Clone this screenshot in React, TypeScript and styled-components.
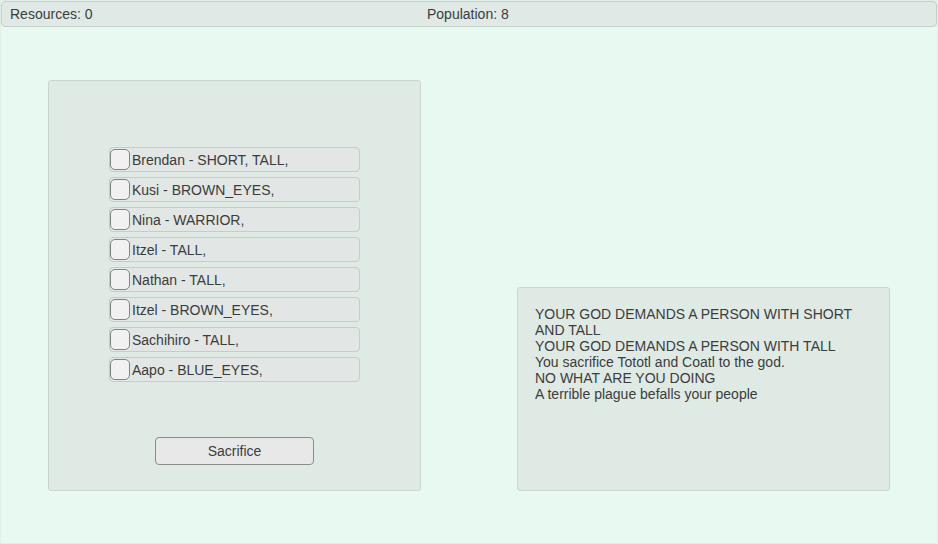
import React from "react";
import styled, { createGlobalStyle } from "styled-components";

const Global = createGlobalStyle`
  html, body { margin: 0; padding: 0; }
  body {
    width: 938px;
    height: 544px;
    overflow: hidden;
    font-family: "Liberation Sans", Arial, sans-serif;
    color: #3a3d3b;
  }
`;

const Screen = styled.div`
  box-sizing: border-box;
  width: 938px;
  height: 544px;
  background: #e8f9f1;
  border: 1px solid #e0eee7;
  display: flex;
  flex-direction: column;
`;

const TopBar = styled.div`
  box-sizing: border-box;
  height: 26px;
  background: #e0e9e5;
  border: 1px solid #c4d0ca;
  border-radius: 4px;
  display: flex;
  align-items: center;
  font-size: 14px;
  padding-left: 8px;
`;

const Stat = styled.span<{ $width?: number }>`
  display: inline-block;
  width: ${(p) => (p.$width ? `${p.$width}px` : "auto")};
`;

const Main = styled.div`
  display: flex;
  align-items: flex-end;
  gap: 96px;
  padding-left: 47px;
  margin-top: 53px;
`;

const Panel = styled.div<{ $height: number }>`
  box-sizing: border-box;
  width: 373px;
  height: ${(p) => p.$height}px;
  background: #e0eae5;
  border: 1px solid #c9d6cf;
  border-radius: 3px;
`;

const ListPanel = styled(Panel)`
  display: flex;
  flex-direction: column;
  align-items: center;
  padding-top: 66px;
`;

const RowList = styled.div`
  display: flex;
  flex-direction: column;
  gap: 5px;
`;

const Row = styled.label`
  box-sizing: border-box;
  width: 251px;
  height: 25px;
  background: #e2e6e4;
  border: 1px solid #c6cdc9;
  border-radius: 4px;
  display: flex;
  align-items: center;
  padding-left: 0;
  font-size: 14px;
  cursor: pointer;
`;

const Box = styled.span`
  box-sizing: border-box;
  width: 20px;
  height: 21px;
  background: #f1f1f1;
  border: 1px solid #7f8582;
  border-radius: 5px;
  margin-right: 2px;
  flex-shrink: 0;
`;

const Button = styled.button`
  box-sizing: border-box;
  margin-top: 55px;
  width: 159px;
  height: 28px;
  background: #e8e8e8;
  border: 1px solid #8a8d8b;
  border-radius: 4px;
  font-family: "Liberation Sans", Arial, sans-serif;
  font-size: 14px;
  color: #3a3d3b;
  padding: 0;
  cursor: pointer;
`;

const LogPanel = styled(Panel)`
  padding: 18px 18px 0 17px;
  font-size: 14px;
  line-height: 16px;
`;

const LogLine = styled.div``;

const people = [
  "Brendan - SHORT, TALL,",
  "Kusi - BROWN_EYES,",
  "Nina - WARRIOR,",
  "Itzel - TALL,",
  "Nathan - TALL,",
  "Itzel - BROWN_EYES,",
  "Sachihiro - TALL,",
  "Aapo - BLUE_EYES,",
];

const log = [
  "YOUR GOD DEMANDS A PERSON WITH SHORT AND TALL",
  "YOUR GOD DEMANDS A PERSON WITH TALL",
  "You sacrifice Tototl and Coatl to the god.",
  "NO WHAT ARE YOU DOING",
  "A terrible plague befalls your people",
];

export default function App() {
  return (
    <>
      <Global />
      <Screen>
        <TopBar>
          <Stat $width={417}>Resources: 0</Stat>
          <Stat>Population: 8</Stat>
        </TopBar>
        <Main>
          <ListPanel $height={411}>
            <RowList>
              {people.map((p, i) => (
                <Row key={i}>
                  <Box />
                  {p}
                </Row>
              ))}
            </RowList>
            <Button>Sacrifice</Button>
          </ListPanel>
          <LogPanel $height={204}>
            {log.map((l, i) => (
              <LogLine key={i}>{l}</LogLine>
            ))}
          </LogPanel>
        </Main>
      </Screen>
    </>
  );
}
